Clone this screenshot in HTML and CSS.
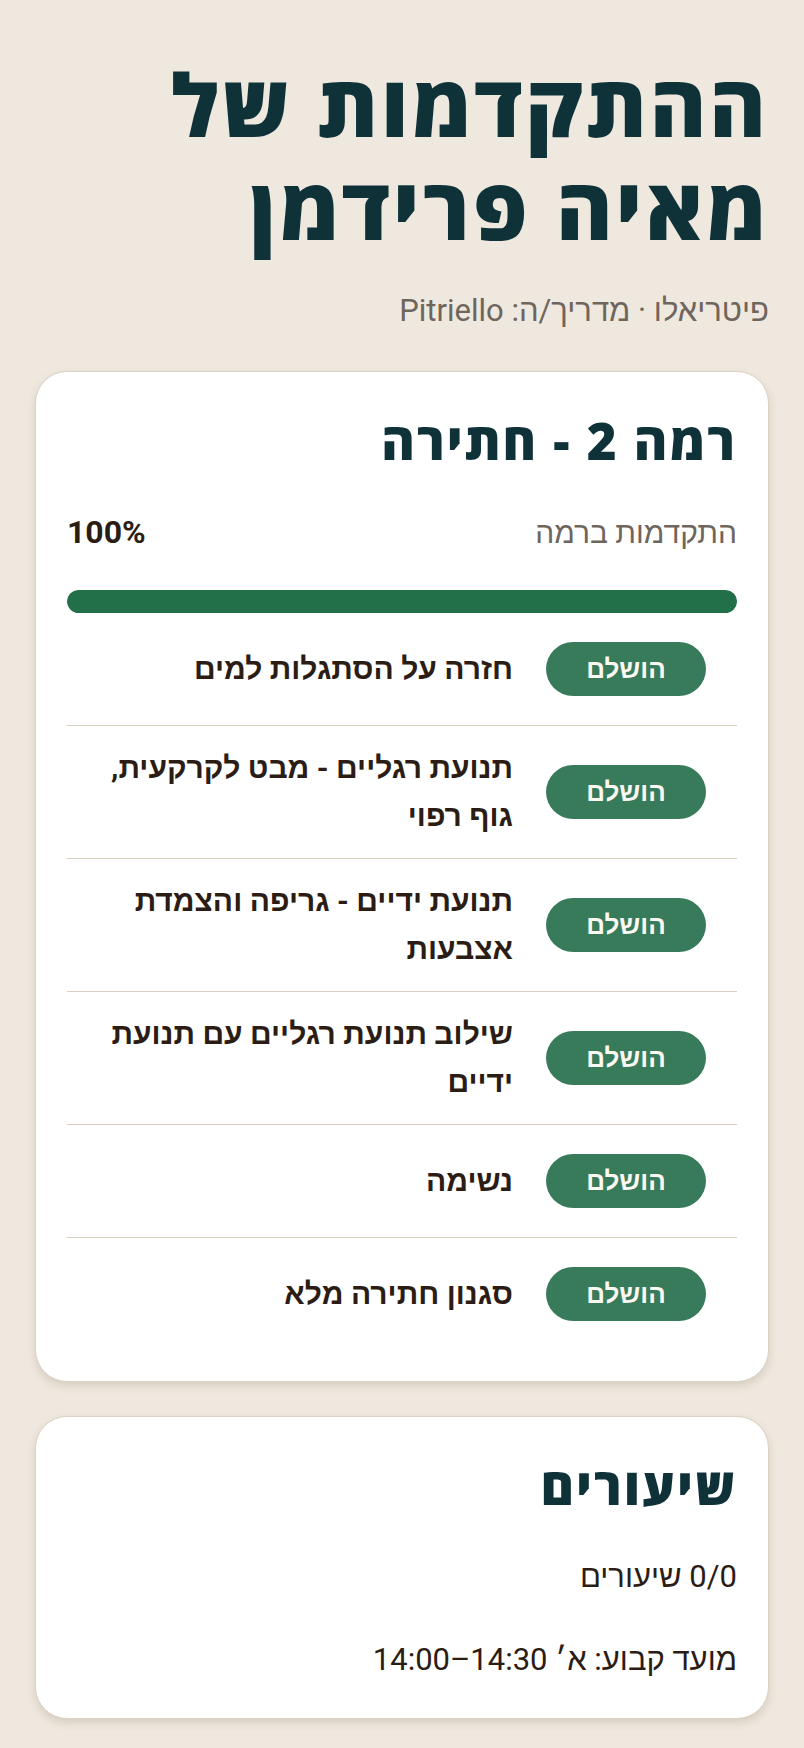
FILE: index.html
```html
<!DOCTYPE html>
<html lang="he" dir="rtl">
<head>
<meta charset="utf-8">
<title>ההתקדמות של מאיה פרידמן</title>
<link rel="stylesheet" href="styles.css">
</head>
<body>
<main class="page">
  <header class="page-head">
    <h1 class="page-title">ההתקדמות של מאיה פרידמן</h1>
    <p class="page-sub">פיטריאלו · מדריך/ה: Pitriello</p>
  </header>

  <section class="card">
    <h2 class="card-title">רמה 2 - חתירה</h2>
    <div class="progress-head">
      <span class="progress-label">התקדמות ברמה</span>
      <span class="progress-value">100%</span>
    </div>
    <div class="bar"><div class="bar-fill" style="width:100%"></div></div>
    <ul class="skills">
      <li class="skill"><span class="badge">הושלם</span><span class="skill-name">חזרה על הסתגלות למים</span></li>
      <li class="skill"><span class="badge">הושלם</span><span class="skill-name">תנועת רגליים - מבט לקרקעית, גוף רפוי</span></li>
      <li class="skill"><span class="badge">הושלם</span><span class="skill-name">תנועת ידיים - גריפה והצמדת אצבעות</span></li>
      <li class="skill"><span class="badge">הושלם</span><span class="skill-name">שילוב תנועת רגליים עם תנועת ידיים</span></li>
      <li class="skill"><span class="badge">הושלם</span><span class="skill-name">נשימה</span></li>
      <li class="skill"><span class="badge">הושלם</span><span class="skill-name">סגנון חתירה מלא</span></li>
    </ul>
  </section>

  <section class="card card-lessons">
    <h2 class="card-title">שיעורים</h2>
    <p class="info">0/0 שיעורים</p>
    <p class="info">מועד קבוע: א׳ <bdi dir="ltr">14:00–14:30</bdi></p>
  </section>
</main>
</body>
</html>
```
FILE: styles.css
```css
* { box-sizing: border-box; }

body {
  margin: 0;
  background: #efe8df;
  font-family: Roboto, sans-serif;
  color: #2b1d14;
}

.page {
  padding: 52px 35px 33px;
  display: flex;
  flex-direction: column;
}

.page-title {
  margin: 0;
  font-family: "Open Sans", sans-serif;
  font-weight: 800;
  font-size: 86px;
  line-height: 103px;
  letter-spacing: 3px;
  color: #0f3239;
}

.page-sub {
  margin: 30px 0 0;
  font-size: 31px;
  line-height: 46px;
  color: #6e655c;
}

.card {
  margin-top: 37px;
  background: #fff;
  border: 1px solid #dcd1c2;
  border-radius: 32px;
  padding: 40px 31px 31px;
  box-shadow: 0 4px 8px rgba(90, 70, 40, 0.16);
}

.card-lessons {
  margin-top: 34px;
  padding-bottom: 35px;
}

.card-title {
  margin: 0;
  font-family: "Open Sans", sans-serif;
  font-weight: 800;
  font-size: 51px;
  line-height: 56px;
  letter-spacing: 2px;
  color: #0f3239;
}

.progress-head {
  margin-top: 44px;
  display: flex;
  justify-content: space-between;
  align-items: baseline;
  line-height: 40px;
}

.progress-label {
  font-size: 30px;
  color: #6e655c;
}

.progress-value {
  font-size: 32px;
  font-weight: 700;
  color: #2b1d14;
}

.bar {
  margin-top: 37px;
  height: 23px;
  border-radius: 12px;
  background: #e6ddd1;
  overflow: hidden;
}

.bar-fill {
  height: 100%;
  background: #21704a;
  border-radius: 12px;
}

.skills {
  list-style: none;
  margin: 0;
  padding: 0;
}

.skill {
  display: flex;
  align-items: center;
  gap: 33px;
  min-height: 113px;
  padding: 18px 31px;
  border-bottom: 1px solid #dbcfc1;
}

.skill:last-child {
  border-bottom: none;
  min-height: 112px;
}

.badge {
  flex: 0 0 160px;
  height: 54px;
  border-radius: 27px;
  background: #377b5a;
  color: #fbf8f1;
  font-size: 26px;
  font-weight: 700;
  display: flex;
  align-items: center;
  justify-content: center;
}

.skill-name {
  flex: 1;
  font-size: 30px;
  font-weight: 700;
  line-height: 48px;
  color: #2b1d14;
}

.info {
  margin: 41px 0 0;
  font-size: 31px;
  line-height: 46px;
  color: #2b1d14;
}

.info + .info {
  margin-top: 37px;
}
```
